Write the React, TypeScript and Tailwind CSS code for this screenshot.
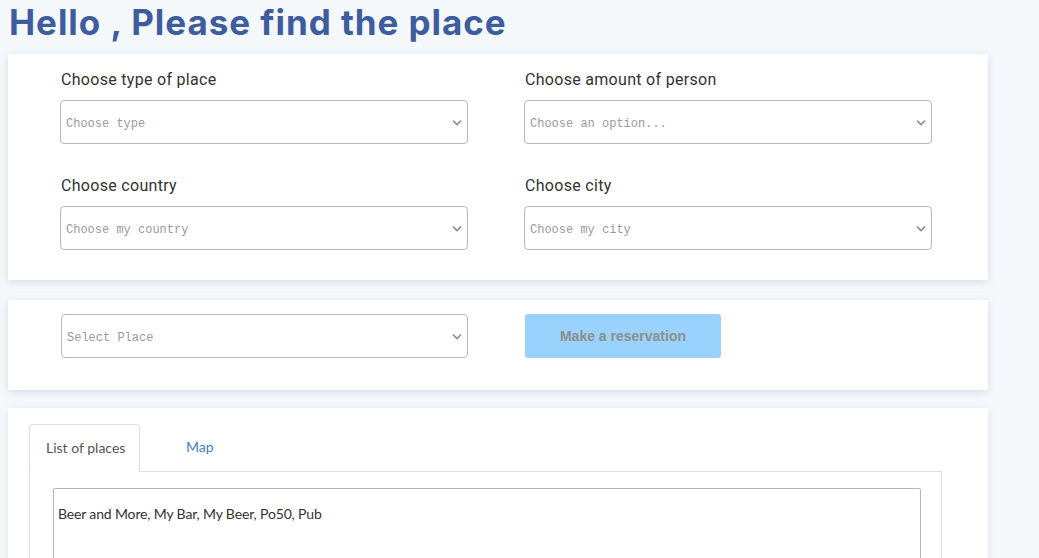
import React from "react";

// 下向きの小さなシェブロン（セレクトボックス用）
function Chevron() {
  return (
    <svg width="10" height="7" viewBox="0 0 10 7" className="shrink-0">
      <path d="M1 1.5 L5 5.5 L9 1.5" fill="none" stroke="#8c8c8c" strokeWidth="1.6" />
    </svg>
  );
}

function FakeSelect({ placeholder, wide = true }: { placeholder: string; wide?: boolean }) {
  return (
    <div
      className={
        "h-[44px] flex items-center justify-between pl-[5px] pr-[5px] border border-[#b9b9b9] rounded-[4px] bg-white " +
        (wide ? "w-[408px]" : "w-[407px]")
      }
    >
      <span className="pt-[3px] text-[12px] text-[#9a9a9a] font-['Liberation_Mono',monospace]">{placeholder}</span>
      <Chevron />
    </div>
  );
}

function Field({ label, placeholder }: { label: string; placeholder: string }) {
  return (
    <div className="flex flex-col">
      <label className="pl-[1px] pt-[1px] text-[16px] leading-[24px] text-[#333] font-['Roboto',sans-serif] tracking-[0.3px] mb-[8px]">
        {label}
      </label>
      <FakeSelect placeholder={placeholder} />
    </div>
  );
}

export default function App() {
  return (
    <div className="h-[558px] w-[1039px] bg-[#f5f8fb] px-2 font-['Roboto',sans-serif] overflow-hidden">
      <h1 className="pl-[1px] pt-[1px] h-[54px] text-[35px] leading-[42px] font-bold text-[#3d5d9e] font-['Inter',sans-serif] tracking-[0.95px]">
        Hello , Please find the place
      </h1>

      {/* 検索条件 */}
      <div className="w-[980px] bg-white shadow-[0_2px_8px_rgba(160,170,190,0.35)] pt-[13px] pb-[30px] pl-[52px]">
        <div className="grid grid-cols-[408px_408px] gap-x-[56px] gap-y-[29px]">
          <Field label="Choose type of place" placeholder="Choose type" />
          <Field label="Choose amount of person" placeholder="Choose an option..." />
          <Field label="Choose country" placeholder="Choose my country" />
          <Field label="Choose city" placeholder="Choose my city" />
        </div>
      </div>

      {/* 予約 */}
      <div className="mt-[20px] w-[980px] bg-white shadow-[0_2px_8px_rgba(160,170,190,0.35)] pt-[14px] pb-[32px] pl-[53px] flex items-start gap-[57px]">
        <FakeSelect placeholder="Select Place" wide={false} />
        <button className="h-[44px] w-[196px] rounded-[3px] bg-[#99d3fd] text-[14px] font-bold text-[#8d8d8d] font-['Liberation_Sans',Arial,sans-serif]">
          Make a reservation
        </button>
      </div>

      {/* タブ */}
      <div className="mt-[18px] w-[980px] h-[200px] bg-white shadow-[0_2px_8px_rgba(160,170,190,0.25)] pt-[16px] pl-[21px] font-['Lato',sans-serif]">
        <div className="w-[913px] flex items-end border-b border-[#ddd] h-[48px]">
          <div className="h-[48px] w-[111px] -mb-px border border-[#ddd] border-b-white rounded-t-[4px] bg-white flex items-center pl-[16px] pb-[2px] text-[14px] text-[#555]">
            List of places
          </div>
          <div className="h-[47px] flex items-center ml-[46px] pb-[2px] text-[14px] text-[#3f7fc0]">Map</div>
        </div>
        <div className="w-[913px] h-[200px] border-x border-[#ddd] pt-[16px] pl-[23px]">
          <div className="w-[868px] h-[200px] border border-[#b5b5b5] rounded-[2px] pt-[14px] pl-[4px] text-[14px] tracking-[-0.15px] text-[#333]">
            Beer and More, My Bar, My Beer, Po50, Pub
          </div>
        </div>
      </div>
    </div>
  );
}
